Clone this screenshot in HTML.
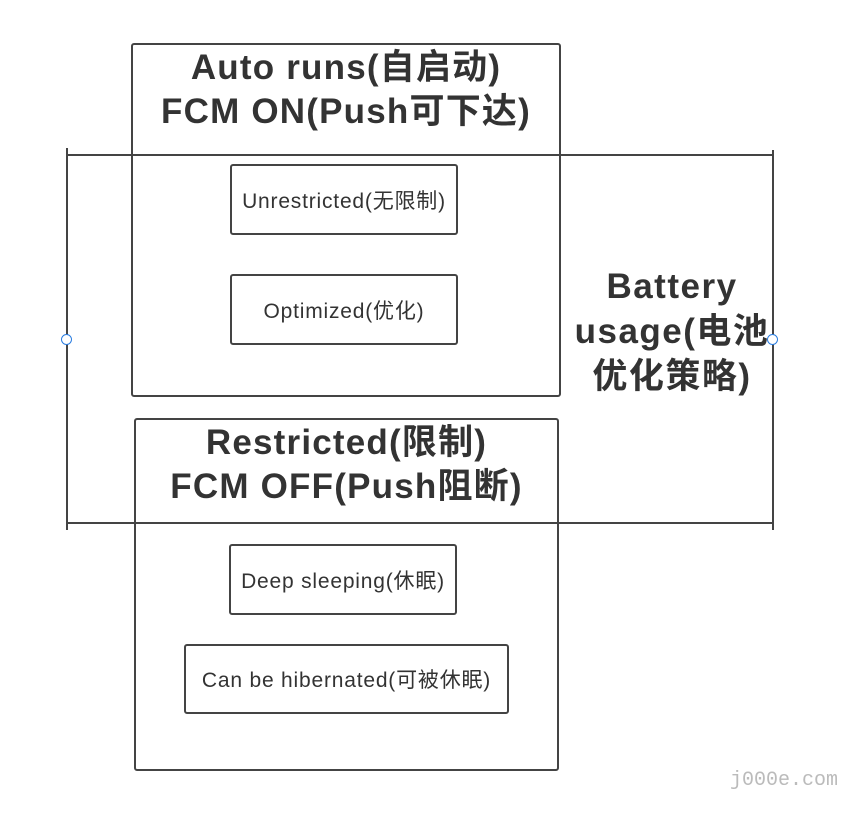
<!DOCTYPE html>
<html><head><meta charset="utf-8"><style>
html,body{margin:0;padding:0;background:#fff;}
body{width:856px;height:813px;position:relative;overflow:hidden;font-family:"Liberation Sans","Noto Sans CJK SC",sans-serif;color:#333;}
.l{position:absolute;background:#444;}
.b{position:absolute;border:2px solid #444;border-radius:3px;box-sizing:border-box;}
.t{position:absolute;text-align:center;font-weight:bold;font-size:35px;line-height:44px;color:#333;white-space:nowrap;letter-spacing:1.2px;}
.s{position:absolute;display:flex;align-items:center;justify-content:center;font-size:21px;color:#333;border:2px solid #444;border-radius:3px;box-sizing:border-box;background:#fff;white-space:nowrap;letter-spacing:0.8px;}
.dot{position:absolute;width:9px;height:9px;border:1.5px solid #2b7de0;border-radius:50%;background:#fff;}
</style></head><body>
<div class="l" style="left:66px;top:148px;width:2px;height:382px"></div>
<div class="l" style="left:772px;top:150px;width:2px;height:380px"></div>
<div class="l" style="left:67px;top:154px;width:706px;height:2px"></div>
<div class="l" style="left:67px;top:522px;width:706px;height:2px"></div>

<div class="b" style="left:131px;top:43px;width:430px;height:354px"></div>
<div class="t" style="left:131px;top:46px;width:430px">Auto runs(自启动)<br>FCM ON(Push可下达)</div>
<div class="s" style="left:230px;top:164px;width:228px;height:71px">Unrestricted(无限制)</div>
<div class="s" style="left:230px;top:274px;width:228px;height:71px">Optimized(优化)</div>

<div class="b" style="left:134px;top:418px;width:425px;height:353px"></div>
<div class="t" style="left:134px;top:421px;width:425px">Restricted(限制)<br>FCM OFF(Push阻断)</div>
<div class="s" style="left:229px;top:544px;width:228px;height:71px">Deep sleeping(休眠)</div>
<div class="s" style="left:184px;top:644px;width:325px;height:70px">Can be hibernated(可被休眠)</div>

<div class="t" style="left:562px;top:264px;width:220px;line-height:45px;letter-spacing:1.5px">Battery<br>usage(电池<br>优化策略)</div>

<div class="dot" style="left:61px;top:334px"></div>
<div class="dot" style="left:767px;top:334px"></div>

<div style="position:absolute;left:730px;top:769px;font-family:'Liberation Mono',monospace;font-size:20px;color:#bbb;">j000e.com</div>
</body></html>
